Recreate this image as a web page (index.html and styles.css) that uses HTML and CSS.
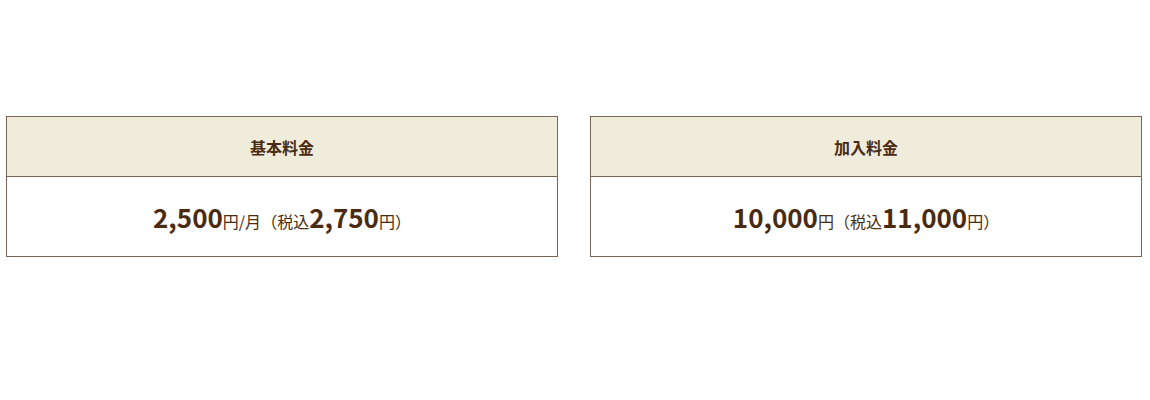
FILE: index.html
```html
<!DOCTYPE html>
<html lang="ja">
<head>
<meta charset="utf-8">
<link rel="stylesheet" href="styles.css">
</head>
<body>
<section class="prices">
  <div class="card">
    <div class="card-head">基本料金</div>
    <div class="card-body">
      <p class="price"><span class="num">2,500</span><span class="unit">円/月</span><span class="tax">（税込</span><span class="num">2,750</span><span class="unit">円）</span></p>
    </div>
  </div>
  <div class="card">
    <div class="card-head">加入料金</div>
    <div class="card-body">
      <p class="price"><span class="num">10,000</span><span class="unit">円</span><span class="tax">（税込</span><span class="num">11,000</span><span class="unit">円）</span></p>
    </div>
  </div>
</section>
</body>
</html>
```
FILE: styles.css
```css
html, body {
  margin: 0;
  padding: 0;
  background: #fff;
}
body {
  font-family: "Noto Sans CJK JP", sans-serif;
  color: #4a2b12;
}
.prices {
  display: grid;
  grid-template-columns: 552px 552px;
  column-gap: 32px;
  padding: 116px 0 0 6px;
}
.card {
  border: 1px solid #7b6455;
}
.card-head {
  height: 59px;
  background: #efecdc;
  border-bottom: 1px solid #7b6455;
  display: flex;
  align-items: center;
  justify-content: center;
  font-weight: 700;
  font-size: 16px;
}
.card-body {
  height: 79px;
  display: flex;
  align-items: center;
  justify-content: center;
}
.price {
  margin: 0;
  line-height: 1;
  text-align: center;
  white-space: nowrap;
}
.num {
  font-weight: 700;
  font-size: 26px;
}
.unit,
.tax {
  font-size: 16px;
}
```
